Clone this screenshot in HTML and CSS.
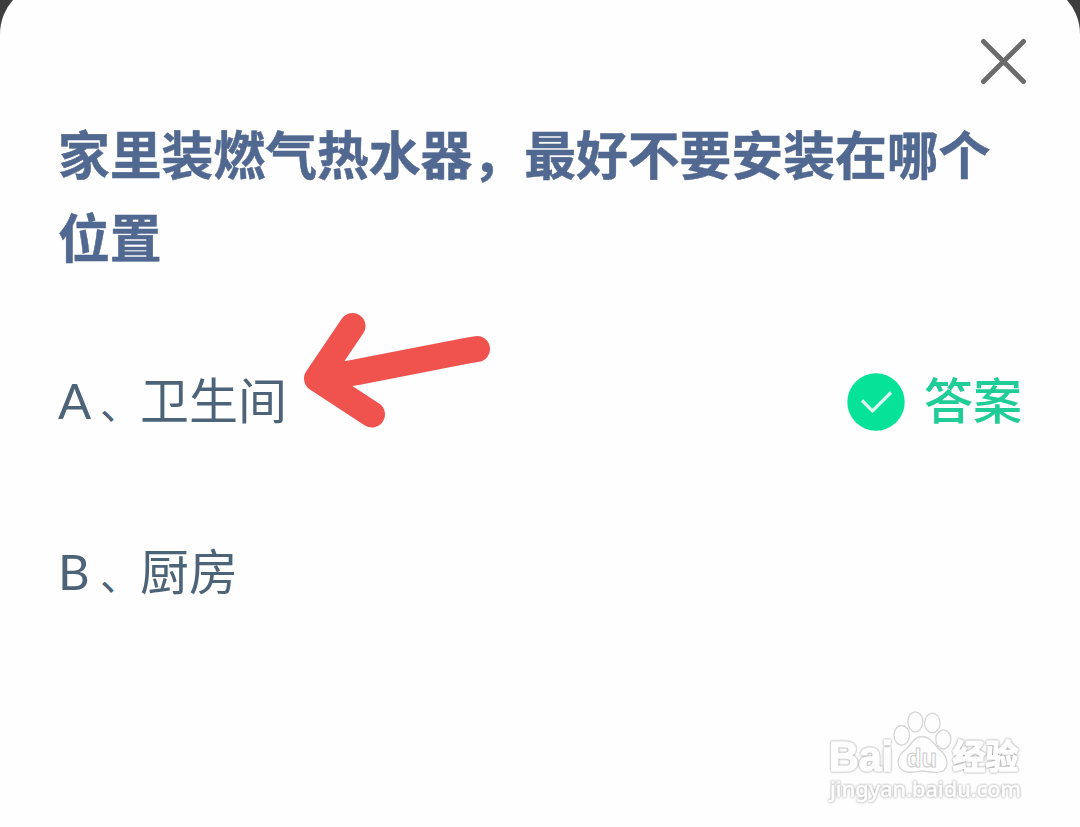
FILE: index.html
```html
<!DOCTYPE html>
<html lang="zh-CN">
<head>
    <meta charset="UTF-8">
    <meta name="viewport" content="width=device-width, initial-scale=1.0">
    <title>答题</title>
    <link rel="stylesheet" href="styles.css">
</head>
<body>
    <div class="sheet">
        <div class="sheet-header">
            <svg class="close-icon" viewBox="0 0 46 46">
                <path d="M3.500 3.500L43.500 43.500M43.500 3.500L3.500 43.500"/>
            </svg>
        </div>

        <h1 class="question">家里装燃气热水器，最好不要安装在哪个位置</h1>

        <div class="options">
            <div class="option">
                <span class="letter">A</span><span class="comma">、</span><span class="option-text">卫生间</span>
                <div class="answer">
                    <svg class="check-icon" viewBox="0 0 58 58">
                        <circle cx="29" cy="29" r="28.7"/>
                        <path d="M15 27.5L25.5 38L44 19.5"/>
                    </svg>
                    <span class="answer-text">答案</span>
                </div>
                <svg class="arrow" viewBox="0 0 190 118">
                    <path d="M50.500 14L15 66.500L70 102.500M15 66.500L53 60.500L130 45.500Q155 40.500 175 37"/>
                </svg>
            </div>
            <div class="option">
                <span class="letter">B</span><span class="comma">、</span><span class="option-text">厨房</span>
            </div>
        </div>

        <svg class="watermark" viewBox="0 0 210 110">
            <text class="mark-brand" x="9" y="60.500" textLength="64" lengthAdjust="spacingAndGlyphs">Bai</text>
            <g class="paw">
                <ellipse cx="81.700" cy="25.300" rx="7.800" ry="9.800"/>
                <ellipse cx="95.300" cy="11.800" rx="7.500" ry="10"/>
                <ellipse cx="112.300" cy="13" rx="7.800" ry="9.800"/>
                <ellipse cx="123.300" cy="29.300" rx="7.500" ry="9.500"/>
                <path d="M102 26.500C110 26.500 114 34 119 39C131 49 129 62 117 62.300C109 62.500 106 61 102 61C98 61 93 63 87 62C75 59 76 47 85 40C92 34 94 26.500 102 26.500Z"/>
            </g>
            <text class="mark-du" x="86" y="56.500" textLength="31" lengthAdjust="spacingAndGlyphs">du</text>
            <text class="mark-cn" x="132.500" y="58.500" textLength="66" lengthAdjust="spacingAndGlyphs">经验</text>
            <text class="mark-url" x="10" y="87" textLength="191" lengthAdjust="spacingAndGlyphs">jingyan.baidu.com</text>
        </svg>
    </div>
</body>
</html>
```
FILE: styles.css
```css
* {
    box-sizing: border-box;
}

body {
    margin: 0;
    height: 827px;
    overflow: hidden;
    background: #3e3e3e;
    font-family: "Liberation Sans", "Noto Sans CJK SC", sans-serif;
}

.sheet {
    display: flex;
    flex-direction: column;
    height: 844px;
    margin-top: -17px;
    padding: 55px 54px 0 58px;
    border-radius: 51px 51px 0 0;
    background: #fefefe;
}

.sheet-header {
    display: flex;
    justify-content: flex-end;
    height: 46px;
}

.close-icon {
    width: 46px;
    height: 46px;
    fill: none;
    stroke: #6b6b6b;
    stroke-width: 5;
    stroke-linecap: round;
}

.question {
    margin: 27px 0 0;
    color: #516890;
    font-family: "Noto Sans CJK SC", sans-serif;
    font-size: 51.8px;
    font-weight: 700;
    line-height: 83px;
    -webkit-text-stroke: 0.5px #516890;
}

.options {
    margin-top: 82px;
    padding-right: 4px;
}

.option {
    position: relative;
    display: flex;
    align-items: center;
    height: 86px;
    margin-bottom: 85px;
    color: #4d6378;
    font-size: 49px;
    line-height: 86px;
}

.letter {
    width: 42px;
    padding-bottom: 5px;
    font-family: Lato, sans-serif;
    font-size: 49px;
}

.comma {
    width: 40px;
    font-family: "Noto Sans CJK SC", sans-serif;
    font-size: 40px;
    white-space: nowrap;
}

.answer {
    display: flex;
    align-items: center;
    gap: 19px;
    margin-left: auto;
    color: #20cd96;
    font-weight: 500;
}

.check-icon {
    width: 58px;
    height: 58px;
}

.check-icon circle {
    fill: #07e299;
}

.check-icon path {
    fill: none;
    stroke: #d9fff0;
    stroke-width: 3.2;
}

.arrow {
    position: absolute;
    left: 244px;
    top: -47px;
    width: 190px;
    height: 118px;
    fill: none;
    stroke: #f0534d;
    stroke-width: 26;
    stroke-linecap: round;
    stroke-linejoin: round;
}

.watermark {
    width: 210px;
    height: 110px;
    margin: auto -4px 7px 0;
    align-self: flex-end;
    fill: #fefefe;
    stroke: #d6d6d6;
    stroke-width: 1.3;
}

/* thick white lettering with a thin grey rim */
.mark-brand,
.mark-cn {
    stroke: #fefefe;
    stroke-width: 1.6;
    stroke-linejoin: round;
    filter: drop-shadow(0 0 0.8px #8c8c8c);
}

.mark-brand {
    font-family: "Liberation Sans", sans-serif;
    font-size: 42px;
    font-weight: 700;
}

.mark-du {
    font-family: "Liberation Sans", sans-serif;
    font-size: 25px;
    font-weight: 700;
    stroke: #cccccc;
    stroke-width: 1;
}

.mark-cn {
    font-family: "Noto Sans CJK SC", sans-serif;
    font-size: 34px;
    font-weight: 700;
}

.mark-url {
    font-family: "Noto Sans", sans-serif;
    font-size: 22px;
    font-weight: 500;
    stroke: #fefefe;
    stroke-width: 0.5;
    filter: drop-shadow(0 0 0.8px #8c8c8c);
}
```
